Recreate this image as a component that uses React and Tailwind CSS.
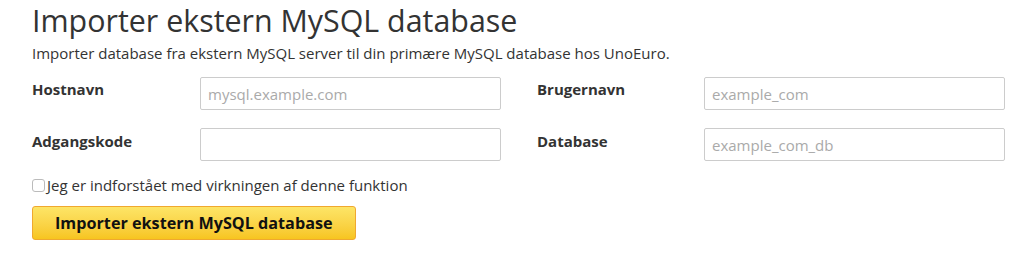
export default function App() {
  return (
    <div
      className="min-h-[261px] bg-white px-[32px] pt-[1px] text-[#333]"
      style={{ fontFamily: '"Open Sans", sans-serif' }}
    >
      <h1 className="text-[30.4px] leading-[40px] font-normal">
        Importer ekstern MySQL database
      </h1>
      <p className="mt-[2px] text-[15px] leading-[20px]">
        Importer database fra ekstern MySQL server til din primære MySQL database hos UnoEuro.
      </p>

      <div className="mt-[14px] flex flex-col gap-[18px]">
        <div className="flex gap-[36px]">
          <div className="flex">
            <label className="w-[168px] pt-[2px] text-[15px] leading-[20px] font-bold">Hostnavn</label>
            <input
              className="h-[33px] w-[301px] rounded-[2px] border border-[#ccc] px-[7px] text-[15px] placeholder:text-[#aaa]"
              placeholder="mysql.example.com"
            />
          </div>
          <div className="flex">
            <label className="w-[167px] pt-[2px] text-[15px] leading-[20px] font-bold">Brugernavn</label>
            <input
              className="h-[33px] w-[301px] rounded-[2px] border border-[#ccc] px-[7px] text-[15px] placeholder:text-[#aaa]"
              placeholder="example_com"
            />
          </div>
        </div>
        <div className="flex gap-[36px]">
          <div className="flex">
            <label className="w-[168px] pt-[3px] text-[15px] leading-[20px] font-bold">Adgangskode</label>
            <input
              type="password"
              className="h-[33px] w-[301px] rounded-[2px] border border-[#ccc] px-[7px] text-[15px]"
            />
          </div>
          <div className="flex">
            <label className="w-[167px] pt-[3px] text-[15px] leading-[20px] font-bold">Database</label>
            <input
              className="h-[33px] w-[301px] rounded-[2px] border border-[#ccc] px-[7px] text-[15px] placeholder:text-[#aaa]"
              placeholder="example_com_db"
            />
          </div>
        </div>
      </div>

      <label className="mt-[14px] flex items-center gap-[2px] text-[15px] leading-[20px]">
        <input
          type="checkbox"
          className="h-[13px] w-[13px] appearance-none rounded-[3px] border border-[#bbb] bg-white"
        />
        Jeg er indforstået med virkningen af denne funktion
      </label>

      <button className="mt-[11px] h-[34px] rounded-[3px] border border-[#f0a830] bg-gradient-to-b from-[#fde566] to-[#f7c51e] px-[22px] text-[16.2px] font-bold text-[#111]">
        Importer ekstern MySQL database
      </button>
    </div>
  );
}
